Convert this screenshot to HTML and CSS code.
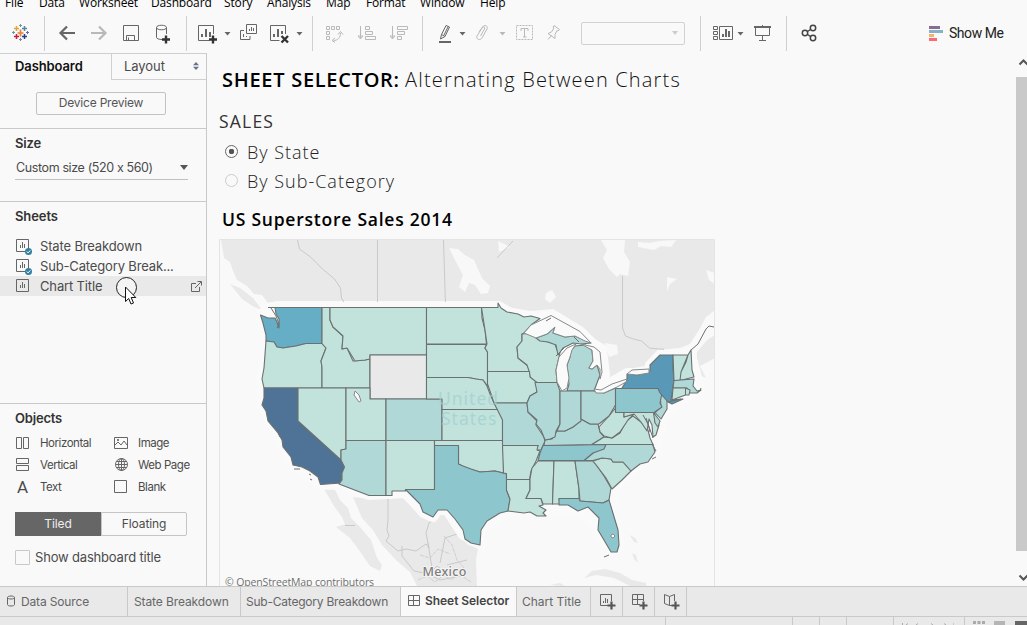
FILE: index.html
```html
<!DOCTYPE html>
<html lang="en">
<head>
<meta charset="utf-8">
<title>Sheet Selector</title>
<link rel="stylesheet" href="styles.css">
</head>
<body>
<nav class="menu"><span>File</span><span>Data</span><span>Worksheet</span><span>Dashboard</span><span>Story</span><span>Analysis</span><span>Map</span><span>Format</span><span>Window</span><span>Help</span></nav>

<header class="toolbar">
  <svg width="44" height="40" viewBox="0 13 44 40" stroke-width="1.5">
    <path d="M17.5 33h6M20.500 29.500v7" stroke="#eb7d3c" stroke-width="1.700"/>
    <path d="M14 28.500h5M16.500 26v5" stroke="#e8a33d"/><path d="M22 28.500h5M24.500 26v5" stroke="#5b879b"/>
    <path d="M14 36.500h5M16.500 34v5" stroke="#c72035"/><path d="M22 36.500h5M24.500 34v5" stroke="#1f457e"/>
    <path d="M19 25.500h3M20.500 24v3" stroke="#7099a6" stroke-width="1"/><path d="M19 39.500h3M20.500 38v3" stroke="#7f7fb3" stroke-width="1"/>
    <path d="M12 32.500h3M13.500 31v3" stroke="#59a0b5" stroke-width="1"/><path d="M26 32.500h3M27.500 31v3" stroke="#6b6ba0" stroke-width="1"/>
  </svg>
  <i class="rule"></i>
  <svg width="38" height="40" viewBox="45 13 38 40"><path class="ink heavy" d="M75 33H60.500M67 26.500L60.500 33l6.500 6.500"/></svg>
  <svg width="32" height="40" viewBox="83 13 32 40"><path class="pale heavy" d="M91 33h14.500M99 26.500l6.500 6.500-6.500 6.500"/></svg>
  <svg width="32" height="40" viewBox="115 13 32 40"><path class="ink" d="M123.500 25.500h15v15h-15zM126.500 40v-4.500h8V40M128.500 37.500v3"/></svg>
  <svg width="39" height="40" viewBox="147 13 39 40"><path class="ink" d="M162 39.500c-3 0-5.500-1-5.500-2V27.500c0-3 10-3 10 0V34M156.500 27.500c0 3 10 3 10 0"/><path class="plus" d="M162 39.500h8M166 35.500v8"/></svg>
  <i class="rule"></i>
  <svg width="48" height="40" viewBox="187 13 48 40"><path class="ink" d="M213.500 34v-8.500h-15v15h11"/><path class="bars" d="M202 37v-3M206 37v-8M210 37v-5"/><path class="plus" d="M209 39.500h8M213 35.500v8"/><path class="caret" d="M224.500 32h6l-3 3.500z"/></svg>
  <svg width="29" height="40" viewBox="235 13 29 40"><path class="ink" d="M246.500 24.500h10v9h-10zM244 30.500h-3.500v9h9.500V36M249.500 31v-2M251.500 31v-4M253.500 31v-3M243.500 37v-3M246.500 37v-1"/></svg>
  <svg width="48" height="40" viewBox="264 13 48 40"><path class="ink" d="M285.500 34v-8.500h-15v15h9"/><path class="bars" d="M274 37v-3M278 37v-8M282 34v-3"/><path class="plus" d="M281.500 36l6.500 6.500M288 36l-6.500 6.500"/><path class="caret" d="M296.500 32h6l-3 3.500z"/></svg>
  <i class="rule"></i>
  <svg width="37" height="40" viewBox="313 13 37 40"><path class="pale" d="M326.500 26.500h3v3h-3zM331.500 26.500h3v3h-3zM336.500 26.500h3v3h-3zM326.500 31.500h3v3h-3zM326.500 36.500h3v3h-3zM340.500 33c0 5-3 7.500-7 7.500M338 34.500l2.500-3 2.500 3M335 38l-3 2.500 3 2"/></svg>
  <svg width="32" height="40" viewBox="350 13 32 40"><path class="pale" d="M360.500 26v12M358 36l2.500 3 2.500-3zM365.500 26.500h4v3h-4zM365.500 31.500h7v3h-7zM365.500 36.500h10v3h-10z"/></svg>
  <svg width="40" height="40" viewBox="382 13 40 40"><path class="pale" d="M392.500 26v12M390 36l2.500 3 2.500-3zM397.500 26.500h10v3h-10zM397.500 31.500h7v3h-7zM397.500 36.500h4v3h-4z"/></svg>
  <i class="rule"></i>
  <svg width="47" height="40" viewBox="423 13 47 40"><path class="ink" d="M441.500 34.500l4.500-9 3.500 1.500-4.500 9.500-4.500 2.500zM441.500 34.500l3.500 2M444 35l4-8"/><path class="bars" d="M439 42h12"/><path class="caret" d="M459.500 32h6l-3 3.500z"/></svg>
  <svg width="40" height="40" viewBox="470 13 40 40"><path class="pale" d="M479 32l3.500-5c2-3 6-1 4.500 2l-5 9c-2 3-6.500 1-5-2l5-8c1.500-2 3.500-1 2.500 1l-4 7"/><path class="caret dim" d="M499.500 32h6l-3 3.500z"/></svg>
  <svg width="30" height="40" viewBox="510 13 30 40"><path class="pale" stroke-dasharray="2 1" d="M516.500 25.500h16v14h-16z"/><path class="pale" d="M521 31v-2.500h7V31M524.500 28.500v8.500M523 37h3.500"/></svg>
  <svg width="41" height="40" viewBox="540 13 41 40"><path class="pale" d="M554 25.500l5.500 4-1.500 1.500-1-.5-2 4v4l-7-5 3.500-1.500 2.500-4-1-1zM551.500 35.500l-3.500 4"/></svg>
  <div class="combo"><i></i></div>
  <i class="rule"></i>
  <svg width="47" height="40" viewBox="701 13 47 40"><path class="ink" d="M713.500 26.500h4v3h-4zM713.500 31.500h4v3h-4zM713.500 36.500h4v3h-4zM719.500 26.500h13v13h-13z"/><path class="bars" d="M723 37v-3M726 37v-8M729 37v-6"/><path class="caret" d="M737.500 32h6l-3 3.500z"/></svg>
  <svg width="38" height="40" viewBox="748 13 38 40"><path class="ink" d="M755.500 27.500v8h14v-8M762.500 36v4.500M759 40.500h7M762.500 25v2"/><path class="bars" d="M754 27h17"/></svg>
  <i class="rule"></i>
  <svg width="42" height="40" viewBox="787 13 42 40"><g class="ink dark"><circle cx="805" cy="33" r="2.700"/><circle cx="813" cy="28" r="2.700"/><circle cx="813" cy="38" r="2.700"/><path d="M807.500 31.500l3-2M807.500 34.500l3 2"/></g></svg>
  <div class="show-me"><svg width="14" height="15"><path fill="#8c6b93" d="M0 0h11v3H0z"/><path fill="#84b3c9" d="M0 4h14v3H0z"/><path fill="#fbb26a" d="M0 8h5v3H0z"/><path fill="#fb6b76" d="M0 12h8v3H0z"/></svg><span>Show Me</span></div>
</header>

<main class="work">
  <aside class="side">
    <div class="tabs"><b>Dashboard</b><span>Layout<svg width="6" height="8"><path fill="#66738a" d="M0 3.200L3 0l3 3.200zM0 4.800h6L3 8z"/></svg></span></div>
    <div class="preview"><button>Device Preview</button></div>
    <section class="size"><h2>Size</h2><div class="picker"><span>Custom size (520 x 560)</span><svg width="8" height="5"><path fill="#555" d="M0 0h8L4 5z"/></svg></div></section>
    <section class="sheets"><h2>Sheets</h2>
      <ul>
        <li><svg width="18" height="18"><path class="ink" d="M1.500 2.500h12v12h-12zM5.500 11V8M7.500 11V5M9.500 11V7"/><circle cx="13.500" cy="14.500" r="3.500" fill="#34809f"/><path d="M11.800 14.500l1.300 1.400 2.200-2.500" fill="none" stroke="#fff"/></svg><span>State Breakdown</span></li>
        <li><svg width="18" height="18"><path class="ink" d="M1.500 2.500h12v12h-12zM5.500 11V8M7.500 11V5M9.500 11V7"/><circle cx="13.500" cy="14.500" r="3.500" fill="#34809f"/><path d="M11.800 14.500l1.300 1.400 2.200-2.500" fill="none" stroke="#fff"/></svg><span>Sub-Category Break...</span></li>
        <li class="current"><svg width="18" height="18"><path class="ink" d="M1.500 2.500h12v12h-12zM5.500 11V8M7.500 11V5M9.500 11V7"/></svg><span>Chart Title</span><svg class="open" width="11" height="11"><path class="ink" d="M5 2.500H.5v8h8V6M4 7l6-6M6.500.5h4v4"/></svg></li>
      </ul>
    </section>
    <section class="objects"><h2>Objects</h2>
      <div class="palette">
        <svg width="18" height="16"><path class="ink" d="M1.500 2.500h5v11h-5zM8.500 2.500h5v11h-5z"/></svg><span>Horizontal</span>
        <svg width="18" height="16"><path class="ink" d="M1.500 2.500h13v11h-13zM2 10l3-3 3 3 3-4 3 4"/><circle cx="5" cy="5" r="1" fill="#555"/></svg><span>Image</span>
        <svg width="18" height="16"><path class="ink" d="M1.500 1.500h12v5h-12zM1.500 8.500h12v5h-12z"/></svg><span>Vertical</span>
        <svg width="18" height="16"><g class="ink"><circle cx="8.500" cy="7.500" r="6"/><ellipse cx="8.500" cy="7.500" rx="3" ry="6"/><path d="M8.500 1.500v12M2.500 7.500h12M3.500 4.500h10M3.500 10.500h10"/></g></svg><span>Web Page</span>
        <span class="glyph">A</span><span>Text</span>
        <svg width="18" height="16"><path class="ink" d="M1.500 1.500h12v12h-12z"/></svg><span>Blank</span>
      </div>
      <div class="mode"><b>Tiled</b><span>Floating</span></div>
      <label class="check"><i></i>Show dashboard title</label>
    </section>
    <svg class="pointer" width="26" height="32" viewBox="114 275 26 32"><circle cx="126.500" cy="287.500" r="10" fill="#f4f4f4" stroke="#222"/><path d="M125.500 287v14.500l3.200-3 2.300 5.500 2.500-1-2.300-5.500h4.600z" fill="#fff" stroke="#111"/></svg>
  </aside>

  <section class="canvas">
    <h1><b>SHEET SELECTOR:</b> <span>Alternating Between Charts</span></h1>
    <h3>SALES</h3>
    <div class="choice on"><i></i><span>By State</span></div>
    <div class="choice"><i></i><span>By Sub-Category</span></div>
    <h4>US Superstore Sales 2014</h4>
    <svg class="map" width="496" height="347" viewBox="219 239 496 347">
      <path fill="#e9e9e9" d="M221 240H715V310L706 317 699 330 690 344 680 348 658 350 649 360 644 366 625 370 612 383 603 388 601 380 605 366 602 352 596 346 590 339 578 325 565 316 553 309 530 311 512 308 500 301H276L268 303 262 295 254 294 247 286 237 280 233 271 230 262 224 258z"/>
      <path fill="#e9e9e9" d="M230 284L240 288 253 298 262 310 254 307 242 299zM697 352L707 340 715 335V358L700 366 706 378 697 374z"/>
      <path fill="#e9e9e9" d="M324 489L335 490 340 500 348 508 351 518 360 527 371 540 377 558 382 565 380 571 370 566 359 550 350 538 336 527 345 524 342 517 334 506zM353 497L369 499H390L402 496 413 507 420 517 432 522 443 513 451 518 459 533 468 545 478 548 476 560 477 586H417L410 572 396 560 382 545 373 530 362 518z"/>
      <path fill="#e9e9e9" d="M584 578L592 571 605 569 620 573 632 580 646 583V586H630L614 578 596 575zM630 535l5 3 3 5-4-1zM632 553l4 2 2 8-4-4zM550 585l10-2 5 3z"/>
      <path fill="#f8f8f8" d="M449 248l9 1 7 6 9 5 8 18 8 8-2 7-7 1-6-9-6-2-4 9-6-5 4-12-8-15zM601 240h24l-1 12 6 10-2 14-8-2-3 3-8-8-6-11 4-8zM638 242l12 1 9-2 17-1-5 7-10-1-7 4-16-3zM706 270l9 3v11l-6-4zM667 277l10 2-7 5-3 7zM546 293l6-3 4 7-6 6-5-4zM605 343l12 2 1 9-9 3zM498 241l12 6-11 5z"/>
      <g fill="none" stroke="#c9c9c9"><path d="M297.500 240l2 9 11 8 12 12 12 10 6 9 1 10 4 7M377.500 240v66M443.500 240l2 65M513 241l-16 17M622.500 276v52l3 8 8 3 8 2 8 7 9 1h5v8M388 498v22l-1 10 2 6-3 5 12 10 8-2 10 2 10-7 3 4-3-15 3-10 6-4M402 546v10l12 15 15 3 8-8 10 7M428 543l4 25M440 563l5-25 12-4M447 565l20-5M425 573l15 7 25-5M345 525.500h10"/></g>
      <path d="M418 580l9-4 8 6 9-7 7 5 8-6 12 8M444 536l8 9 5 15 8 9M420 555l10 3 8-9 12 5" fill="none" stroke="#cfcfcf" stroke-dasharray="4 1"/>

      <path class="halo" d="M271 307H498L507 312 527 316 540 318 552 315 580 331 592 343 602 349 605 375 603 387 627 373H650V365L660 355H691L700 388 673 405 663 420 655 452 631 471 612 489 619 545 612 553 597 530 578 509 508 511 481 530V545L463 535 447 510H438L433 517 423 512 405 493 369 495 339 484 320 485 293 464 262 405V380L266 340 260 315z"/>

      <g class="states">
        <path fill="#66aec6" d="M275 307.500H322V343.500H306L296 346 283 348 277 347 274 342 266 341 266 335 263 323 260.500 315 268 318 275 318 277 322 279 328 279 319 276 314z"/>
        <path d="M266 341L274 342 277 347 283 348 296 346 306 343.500H322L326 348 321 361 322 367V388H264L262 379 264 368z"/>
        <path d="M322 307.500H330V320L333 327 343 336 342 349 347 348 353 361 365 360 370 359V388H322V367L321 361 326 348 322 343.500z"/>
        <path d="M330 307.500H426.500V355H370V359L365 360 355 361 347 348 342 349 343 336 333 327 330 320z"/>
        <path fill="#e9e9e9" d="M370 355H426.500V399H370z"/>
        <path fill="#4f7396" d="M264 388H298V421L341 460 344.500 467 342 473 341 483 320.500 484.500 318 477 310 471 302 467 293 465 291 457 283 447 282 440 278 433 268 421 266 411 262 405 264 398z"/>
        <path d="M298 388H346V449L341 450V460L298 421z"/>
        <path d="M346 388H370V399H386V440.500H346z"/>
        <path class="mid" d="M386 399H442V440.500H386z"/>
        <path class="mid" d="M346 440.500H386V495.500H369L339 484 342 480V473L344.500 467 341 460V450L346 449z"/>
        <path d="M386 440.500H434.500V489.500H405.500V491H392V495.500H386z"/>
        <path d="M426.500 307.500H481.500L482 318 485 330 486.500 344H426.500z"/>
        <path d="M426.500 344.500H486.500L485 348 487.500 352V386L483 380 476 379 468 377.500H426.500z"/>
        <path d="M426.500 377.500H468L476 379 483 380 487 386 490 394 494 403 498 409.500H442V399H426.500z"/>
        <path d="M442 409.500H498L502.500 418V440.500H442z"/>
        <path d="M434.500 440.500H502.500L503.500 455V473L495 471 480 472 466 468 458.500 464V445.500H434.500z"/>
        <path class="blue" d="M434.500 445.500H458.500V464L463 466 471 469 480 472 495 471 503 473 506.500 474V490L510 499 508 511 500 513 487 521 481 530 480 545 471 543 465 539 463 530 455 519 447 510H438L433 517 423 512 420 504 413 497 405.500 489.500H434.500z"/>
        <path d="M481.500 307.500H498V303L501 308 507 312 518 314 524 317 531 316 540 318.500 531 325 524 333 522 334V341L517 347 518 358 528 366 529.500 371.500H487.500V352L485 348 487 344 485 330z"/>
        <path d="M522 334L533 333 538 338 548 342 555 344 557 350 561 348 559 357 556 370 557 382.500H535L530 377 529 371 527 365 518 358 517 347 522 341z"/>
        <path class="mid" d="M536 338L547 334 555 327 553 333 565 337 575 336 585 340 591 343 581 344 573 343 563 348 558 355 556 345 548 342 540 341z"/>
        <path class="mid" d="M575 346L585 345 592 350 593 361 589 368 592 369 597 365 600 375 597 383 594 391H567L569 384 568 375 567 365 570 357 571 350z"/>
        <path d="M487.500 371.500H529.500L530 377 537 382.500V392L530 396 527 403H494L490 391 487.500 384z"/>
        <path class="mid" d="M494 403H527L528 412 537 421 536 425 544 437 545 441 543 445.500 541 450 536 450 538 445.500H502.500V420L498 411z"/>
        <path d="M502.500 445.500H538L537 450 540 451 536 461 531 471 529.500 479.500H506.500V473.500L503.500 473z"/>
        <path d="M506.500 479.500H530V490L526 498.500H541L543 505 539 506 546 510 543 513 546 516 537 516 530 512 524 513 508 511 510 499 506.500 490z"/>
        <path d="M538 461H554L552.500 504H543L541 498.500H526L530 490V479L532 468z"/>
        <path d="M554 461H575L579 489V498.500H559L560 504H556L552.500 504z"/>
        <path class="mid" d="M575 461H593L597 466 604 476 611 488 609 500 603 503 580 501 579 489z"/>
        <path class="blue" d="M559 498.500H579L580 501 603 503 609 500 612 510 618 530 619 545 617 552 611 552 604 540 598 530 599 518 588 507 578 511 568 505 559 505z"/>
        <path d="M593 461L602 458 611 459 613 462H623L631 471 622 480 612 489 606 478 597 466z"/>
        <path class="mid" d="M584 460.500L593 453 606 444.500H653L655 452 648 462 640 464 631 471 623 462H613L611 459 602 458 593 460.500z"/>
        <path class="blue" d="M543 445.500L606 444.500 604 449 593 453 584 460.500H538L540 453z"/>
        <path class="mid" d="M545 440L552 439 557 431 565 431 573 427 581 419 590 424 598 424 600 432 604 437 592 444.500 544 445.500z"/>
        <path d="M592 444.500L604 437 612 438 620 433 627 420 633 416 641 422 648 430 650 438 653 444.500z"/>
        <path d="M599 427L609 416 615.500 408 616 412.500H624V417L634 414 628 420 620 432 612 438 604 436 600 432z"/>
        <path class="mid" d="M535 382.500H557L560 391V424L556 431 555 437 550 439 545 440 541 430 536 424 537 420 528 412 527 403 530 396 537 392z"/>
        <path class="mid" d="M560 391H581V421L573 427 565 431H557L560 424z"/>
        <path class="mid" d="M581 391H594L604 393 615.500 388V405L609 416 599 424 590 424 581 419z"/>
        <path d="M624 412.500H654L655 422 659 425 656 435 653 437 652 425 649 419 647 431 641 422 634 414 624 417z"/>
        <path class="mid" d="M653.500 412.500L660 421 658 427 655 423zM660 393L667 397V409L661 419 655 412.500 661 407z"/>
        <path class="blue" d="M615.500 388.500H658L662 393 660 403 662 407 654 412.500H615.500z"/>
        <path fill="#5998b7" d="M621.700 388.500L627 380V374L638 375 650 371V365L660 355H673V370L674 380 671 400 683 399 672 404 668 402 660 393 658 388.500z"/>
        <path d="M673 355H688L686 362 681 372 680 380.500H674zM688 355L691 350 692 370 694 377 680 380.500 681 372z"/>
        <path class="mid" d="M674 380.500L694 379 693 386 697 391 701 390 697 393 690 393 687 388H673z"/>
        <path d="M673 388H685.500V395L672 400zM685.500 388L690 390 689 395H685.500z"/>
      </g>
      <g class="lakes"><path d="M524 333L531 325 551 315.500 580 331.500 591 343 585 341 575 336 565 337 553 333 555 327 547 334 536 338z"/><path d="M557 382L556 370 559 357 567 348 576 344 572 350 570 357 567 365 569 378 567 388 562 391z"/><path d="M581 344L594 347 600 352 602 372 600 379 600 369 597 365 592 369 589 368 593 361 592 350z"/><path d="M594 389L601 390 612 384 627 379 626 382 617 387 604 393 596 393zM627 374L632 370 649 369 649 373 637 375zM355 391l4 4 2 6-2 1-5-7z"/><path d="M611 535l2-1 2 2-2 2-2-1z"/></g>
      <path d="M546 321l5-3M574 337l5 5M556 356l8-8M643 415l5 9 2 8M646 418l7 20M668 402l13-3M271 308l5 8 3 8-2 4M278 432l2 5M652 444l4 7M701 388l-1 3M652 459l4-2M294 469h6M309 474l2 1M310 479l2 1M604 557l5-2M691 350l7-6 8-15 3-3 5 1" fill="none" stroke="#6b7070"/>
      <path d="M268 307.500h7" stroke="#6b7070"/>
      <g class="country"><text x="438" y="405">United</text><text x="441" y="425">States</text></g>
      <text class="mexico" x="422.500" y="576">Mexico</text>
      <text class="credit" x="225" y="586">© OpenStreetMap contributors</text>
      <path d="M219.500 586V239.500H714.500V586" fill="none" stroke="#e4e4e4"/>
    </svg>
  </section>
  <div class="scroll"><svg width="11" height="24"><path d="M3.500 11.500l4-4 4 4" fill="none" stroke="#555" stroke-width="2"/></svg><i></i><svg width="11" height="35"><path d="M3.500 24.500l4 4 4-4" fill="none" stroke="#555" stroke-width="2"/></svg></div>
</main>

<footer class="sheetbar">
  <div class="t-data"><svg width="9" height="13"><path class="ink" d="M.5 2.500v7c0 2 7 2 7 0v-7c0-2-7-2-7 0c0 2 7 2 7 0"/></svg><span>Data Source</span></div>
  <div class="t-state"><span>State Breakdown</span></div><div class="t-sub"><span>Sub-Category Breakdown</span></div>
  <div class="active"><svg width="12" height="12"><path class="ink" d="M.5.500h11v10H.5zM5.500.500v10M.5 5.500h11"/></svg><b>Sheet Selector</b></div>
  <div><span>Chart Title</span></div>
  <div class="add"><svg width="16" height="16"><path class="ink" d="M11.500 7V.5H.5v11H8M3.500 9V7M5.500 9V4M7.500 9V5"/><path class="add-plus" d="M7.500 11.500h8M11.500 7.500v8"/></svg></div>
  <div class="add"><svg width="16" height="16"><path class="ink" d="M11.500 7V.5H.5v10H8M5.500.500v10M.5 5.500h11"/><path class="add-plus" d="M7.500 11.500h8M11.500 7.500v8"/></svg></div>
  <div class="add"><svg width="16" height="16"><path class="ink" d="M5.500 11.500L.5 9.500V.5l5 2 5-2V7M5.500 2.500v9H8"/><path class="add-plus" d="M7.500 11.500h8M11.500 7.500v8"/></svg></div>
</footer>
<div class="status"><i></i><i></i><i></i><i></i><i></i><i class="nav"><svg width="60" height="8"><path fill="none" stroke="#aaa" d="M8.500 6v2M14 6.500l-2 1.500M24 6.500l-2 1.500M37 6.500l2 1.500M50 6.500l2 1.500M60 6v2"/></svg></i><svg width="62" height="8"><path stroke="#aaa" stroke-width="3" d="M8 5.500h3M12.500 5.500h3M17 5.500h3"/><path fill="#b5b5b5" d="M29 4h11v4H29z"/><path fill="#666" d="M50 4h12v4H50z"/></svg></div>
</body>
</html>
```
FILE: styles.css
```css
* { box-sizing: border-box; }
body { margin: 0; width: 1027px; height: 625px; overflow: hidden; display: flex; flex-direction: column; background: #f9f9f9; color: #4b4b4b; font: 13px Inter, sans-serif; }
h1, h2, h3, h4, ul { margin: 0; padding: 0; font-weight: 400; }
svg { display: block; flex: none; }
span, b, label { white-space: nowrap; }

.ink { fill: none; stroke: #666; }
.ink.dark { stroke: #444; stroke-width: 1.5; }
.heavy { stroke-width: 2.2; }
.pale { fill: none; stroke: #b9b9b9; }
.bars { fill: none; stroke: #666; stroke-width: 2; }
.plus { fill: none; stroke: #333; stroke-width: 2.4; }
.caret { fill: #666; }
.caret.dim { fill: #b9b9b9; }

.menu { flex: none; height: 13px; display: grid; grid-template-columns: 34px 40px 72px 73px 43px 59px 40px 54px 60px 60px; padding-left: 5px; color: #000; font: 12px/16px "Open Sans", sans-serif; }
.menu span { height: 16px; margin-top: -5px; letter-spacing: -.15px; }

.toolbar { flex: none; height: 40px; display: flex; align-items: center; }
.rule { flex: none; width: 1px; height: 35px; background: #cfcfcf; }
.combo { width: 104px; height: 23px; border: 1px solid #d2d2d2; border-radius: 2px; margin-right: 15px; display: flex; align-items: center; justify-content: flex-end; padding-right: 6px; }
.combo i { border: 3px solid transparent; border-top: 4px solid #ccc; border-bottom: 0; }
.show-me { display: flex; align-items: center; gap: 6px; margin-left: 100px; color: #222; font: 14px Roboto, sans-serif; letter-spacing: -.45px; }
.show-me span { margin-top: -1px; }

.work { flex: none; height: 533px; display: flex; }
.side { position: relative; width: 207px; border-right: 1px solid #c9c9c9; }
.side h2 { font-weight: 600; font-size: 13px; line-height: 18px; color: #333; letter-spacing: -.2px; }
.tabs { display: flex; height: 27px; border-top: 1px solid #cfcfcf; }
.tabs b { width: 111px; padding-left: 15px; line-height: 24px; font-weight: 600; color: #111; letter-spacing: -.1px; }
.tabs span { flex: 1; display: flex; align-items: center; justify-content: space-between; border: solid #cfcfcf; border-width: 0 0 1px 1px; padding: 0 7px 2px 12px; letter-spacing: -.05px; }
.preview { height: 49px; padding: 12px 40px 0 36px; border-bottom: 1px solid #c9c9c9; }
.preview button { display: block; width: 130px; height: 23px; padding: 0 0 2px; border: 1px solid #c2c2c2; border-radius: 2px; background: none; color: #555; font: 12px Inter, sans-serif; letter-spacing: -.2px; }
.size { height: 73px; padding: 5px 18px 0 15px; border-bottom: 1px solid #c9c9c9; }
.picker { display: flex; align-items: center; justify-content: space-between; height: 28px; border-bottom: 1px solid #c0c0c0; font-size: 12.5px; letter-spacing: -.38px; padding: 4px 0 0 1px; }
.sheets { height: 202px; padding-top: 5px; border-bottom: 1px solid #c9c9c9; }
.sheets h2 { padding-left: 15px; letter-spacing: -.1px; }
.sheets ul { list-style: none; margin-top: 11px; }
.sheets li { height: 20px; display: flex; align-items: center; gap: 7px; padding: 0 4px 0 15px; font-size: 13px; letter-spacing: -.15px; }
.sheets .current { background: #e9e9e9; }
.open { margin-left: auto; }
.objects { padding: 5px 15px 0; }
.palette { display: grid; grid-template-columns: 25px 73px 25px 60px; grid-auto-rows: 22px; align-items: center; margin-top: 5px; font-size: 11.5px; letter-spacing: -.45px; }
.glyph { font: 17px Roboto, sans-serif; padding-left: 2px; }
.mode { display: grid; grid-template-columns: 86px 86px; height: 23px; margin-top: 14px; line-height: 23px; text-align: center; font-size: 12px; }
.mode b { font-weight: 400; background: #666; color: #eee; letter-spacing: -.1px; }
.mode span { line-height: 22px; border: 1px solid #c5c5c5; border-radius: 0 2px 2px 0; letter-spacing: -.1px; }
.check { display: flex; align-items: center; gap: 5px; margin-top: 14px; font-size: 13px; letter-spacing: -.18px; }
.check i { width: 15px; height: 15px; border: 1px solid #c9c9c9; border-radius: 1px; }
.pointer { position: absolute; left: 114px; top: 222px; }

.canvas { width: 809px; padding-left: 12px; font-family: "Open Sans", sans-serif; }
.canvas h1 { height: 56px; padding: 11px 0 0 3px; font-size: 20px; line-height: 32px; color: #111; white-space: nowrap; }
.canvas h1 b { font-weight: 600; color: #000; letter-spacing: .72px; }
.canvas h1 span { font-weight: 300; letter-spacing: 1.18px; }
.canvas h3 { height: 28px; font-size: 17.5px; line-height: 25px; color: #333; font-weight: 500; letter-spacing: 1.2px; }
.choice { height: 29px; display: flex; align-items: center; gap: 9px; padding-left: 6px; font-size: 18px; font-weight: 300; color: #222; letter-spacing: 1px; }
.choice i { width: 13px; height: 13px; border: 1px solid #ccc; border-radius: 50%; }
.choice.on i { border-color: #666; background: radial-gradient(circle, #555 0 2.5px, transparent 3px); }
.canvas h4 { height: 44px; padding: 10px 0 0 3px; font-size: 17.5px; line-height: 28px; font-weight: 600; color: #000; letter-spacing: .76px; }

.halo { fill: #fafafa; stroke: #fafafa; stroke-width: 10; stroke-linejoin: round; }
.states { fill: #c2e3dc; stroke: #6b7070; stroke-width: 1.1; stroke-linejoin: round; }
.mid { fill: #afd8d6; }
.blue { fill: #8ec6ce; }
.lakes { fill: #fafafa; stroke: #858a8a; }
.country { fill: #9fcfd2; opacity: .7; font: 17.5px "Noto Sans", sans-serif; letter-spacing: 1px; }
.mexico { fill: #7d7d7d; stroke: #f5f5f5; stroke-width: 2; paint-order: stroke; font: 500 12.5px "Noto Sans", sans-serif; letter-spacing: .3px; }
.credit { fill: #707070; font: 10.5px "Open Sans", sans-serif; letter-spacing: -.14px; }

.scroll { width: 11px; display: flex; flex-direction: column; }
.scroll i { flex: 1; background: #c9c9c9; }

.sheetbar { flex: none; height: 31px; display: grid; grid-template-columns: 128px 113px 160px 116px 74px 32px 32px 32px; border: solid #c9c9c9; border-width: 1px 0; background: #e9e9e9; color: #666; font-size: 12px; }
.sheetbar div { display: flex; align-items: center; border-right: 1px solid #c9c9c9; padding-left: 5px; }
.sheetbar .t-data { padding-left: 7px; gap: 5px; letter-spacing: -.15px; }
.sheetbar .t-state { padding-left: 6px; letter-spacing: -.1px; }
.sheetbar .t-sub { letter-spacing: -.22px; }
.sheetbar .active { background: #f9f9f9; gap: 5px; padding: 0 0 2px 7px; color: #444; }
.sheetbar .active b { font-weight: 600; letter-spacing: -.05px; }
.sheetbar .add { padding-left: 9px; }
.add-plus { fill: none; stroke: #555; stroke-width: 2.2; }
.status { flex: none; height: 8px; display: grid; grid-template-columns: 666px 127px 27px 27px 47px 71px 62px; background: #e9e9e9; }
.status i { border-right: 1px solid #c9c9c9; }
```
